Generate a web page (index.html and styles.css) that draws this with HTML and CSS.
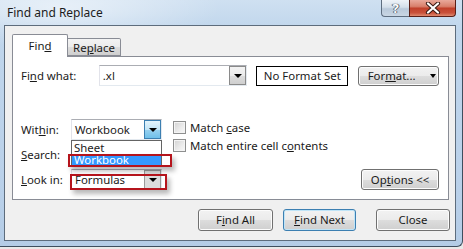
FILE: index.html
```html
<!DOCTYPE html>
<html>
<head>
<meta charset="utf-8">
<link rel="stylesheet" href="styles.css">
</head>
<body>
<div class="window">
  <div class="titlebar">
    <div class="title">Find and Replace</div>
    <div class="caption-btns">
      <div class="cap-help">?</div>
      <div class="cap-close">
        <svg width="16" height="12" viewBox="0 0 16 12">
          <path d="M3 1.5 L13 10.5 M13 1.5 L3 10.5" stroke="#3a1a14" stroke-width="4.2" stroke-linecap="round"/>
          <path d="M3 1.5 L13 10.5 M13 1.5 L3 10.5" stroke="#ffffff" stroke-width="2.2" stroke-linecap="round"/>
        </svg>
      </div>
    </div>
  </div>
  <div class="client">
    <div class="tabs">
      <div class="tab active"><span>Fin<u>d</u></span></div>
      <div class="tab"><span>Re<u>p</u>lace</span></div>
    </div>
    <div class="panel">
      <div class="row-find">
        <div class="lbl lbl-find">Fi<u>n</u>d what:</div>
        <div class="combo combo-find">
          <span class="combo-text">.xl</span>
          <span class="drop"><i class="arrow"></i></span>
        </div>
        <div class="noformat">No Format Set</div>
        <div class="btn btn-format"><span>For<u>m</u>at...</span><i class="arrow small"></i></div>
      </div>
      <div class="lower">
        <div class="opts-grid">
          <div class="lbl">Wit<u>h</u>in:</div>
          <div class="combo combo-sm combo-within">
            <span class="combo-text">Workbook</span>
            <span class="drop drop-hot"><i class="arrow"></i></span>
            <div class="droplist">
              <div class="item"><span class="item-text">Sheet</span></div>
              <div class="item sel"><span class="item-text">Workbook</span></div>
            </div>
          </div>
          <div class="lbl"><u>S</u>earch:</div>
          <div class="combo combo-sm">
            <span class="combo-text"></span>
            <span class="drop"><i class="arrow"></i></span>
          </div>
          <div class="lbl"><u>L</u>ook in:</div>
          <div class="combo combo-sm combo-look">
            <span class="combo-text">Formulas</span>
            <span class="drop drop-gray"><i class="arrow"></i></span>
          </div>
        </div>
        <div class="checks">
          <div class="check"><span class="box"></span><span>Match <u>c</u>ase</span></div>
          <div class="check"><span class="box"></span><span>Match entire cell c<u>o</u>ntents</span></div>
        </div>
        <div class="btn btn-options"><span>Op<u>t</u>ions &lt;&lt;</span></div>
      </div>
      <div class="mark mark1"></div>
      <div class="mark mark2"></div>
    </div>
    <div class="actions">
      <div class="btn btn-act btn-findall"><span>F<u>i</u>nd All</span></div>
      <div class="btn btn-act btn-findnext default"><span><u>F</u>ind Next</span></div>
      <div class="btn btn-act btn-close"><span>Close</span></div>
    </div>
  </div>
</div>
</body>
</html>
```
FILE: styles.css
```css
* { box-sizing: border-box; }
html, body { margin: 0; padding: 0; }
body {
  width: 463px;
  height: 249px;
  overflow: hidden;
  background: #e9e9e9;
  font-family: "Noto Sans", "Open Sans", sans-serif;
  font-size: 11.4px;
  color: #1a1a1a;
}
u { text-decoration: underline; text-underline-offset: 1px; }

.window {
  width: 463px;
  height: 247px;
  background:
    radial-gradient(ellipse 160px 40px at 60px 8px, rgba(255,255,255,0.55), rgba(255,255,255,0) 100%),
    linear-gradient(to bottom, #cfe0f1 0px, #c0d6ec 30px, #b9d0e9 200px, #b4cce6 247px);
  border-bottom: 1px solid #3e4e5e;
  border-right: 1px solid #3e4e5e;
  border-bottom-right-radius: 6px;
}

.titlebar {
  height: 25px;
  display: flex;
  justify-content: space-between;
  align-items: flex-start;
}
.title {
  padding-left: 7px;
  padding-top: 4px;
  line-height: 18px;
  font-size: 12px;
  color: #1c1c1c;
}
.caption-btns {
  display: flex;
  margin-right: 6px;
}
.cap-help {
  width: 28px;
  height: 17px;
  border: 1px solid #5e6e80;
  border-top: none;
  border-right: none;
  border-bottom-left-radius: 4px;
  background: linear-gradient(to bottom, #eef3f8 0%, #d4dfea 45%, #b9c9da 55%, #c9d6e4 100%);
  color: #ffffff;
  font-weight: bold;
  font-size: 13px;
  line-height: 16px;
  text-align: center;
  text-shadow: 0 0 1px #4a5766, 0 0 1px #4a5766, 1px 0 0 #6a7786, -1px 0 0 #6a7786;
}
.cap-close {
  width: 47px;
  height: 17px;
  border: 1px solid #5a1f18;
  border-top: none;
  border-bottom-right-radius: 4px;
  background: linear-gradient(to bottom, #e9a99b 0%, #d9806c 40%, #c1412b 52%, #c9503a 80%, #df8a6f 100%);
  display: flex;
  align-items: center;
  justify-content: center;
}

.client {
  margin-left: 4px;
  width: 452px;
  height: 216px;
  border: 1px solid #5d6c7c;
  background: #f0f0f0;
  padding: 8px 0 0 7px;
}

.tabs {
  display: flex;
  align-items: flex-end;
  height: 22px;
  position: relative;
  z-index: 2;
}
.tab {
  width: 53px;
  height: 18px;
  border: 1px solid #898c95;
  border-left: none;
  background: linear-gradient(to bottom, #f3f3f3 0%, #ebebeb 50%, #dddddd 51%, #cfcfcf 100%);
  text-align: center;
  line-height: 17px;
  border-top-right-radius: 2px;
}
.tab.active {
  width: 56px;
  height: 23px;
  border-left: 1px solid #898c95;
  border-bottom: none;
  background: #ffffff;
  line-height: 22px;
  margin-bottom: -1px;
  border-top-left-radius: 2px;
}

.panel {
  position: relative;
  width: 437px;
  height: 144px;
  background: #ffffff;
  border: 1px solid #898c95;
  padding: 8px 9px 0 8px;
}

.row-find {
  display: flex;
  align-items: center;
  height: 21px;
}
.lbl { line-height: 21px; white-space: nowrap; }
.lbl-find { width: 78px; }

.combo {
  position: relative;
  height: 21px;
  border: 1px solid #abadb3;
  border-left-color: #e2e3ea;
  border-right-color: #e3e9ef;
  border-bottom-color: #e3e9ef;
  background: #ffffff;
  display: flex;
  align-items: center;
  justify-content: space-between;
}
.combo-find { width: 149px; }
.combo-text { padding-left: 3px; line-height: 19px; white-space: nowrap; }
.drop {
  width: 17px;
  height: 19px;
  border: 1px solid #8a8a8a;
  background: linear-gradient(to bottom, #f3f3f3 0%, #ebebeb 50%, #dddddd 51%, #cfcfcf 100%);
  display: flex;
  align-items: center;
  justify-content: center;
}
.drop-hot {
  border-color: #3c7fb1;
  background: linear-gradient(to bottom, #e3f4fc 0%, #c4e5f6 50%, #98d1ef 51%, #6fc0ea 100%);
}
.drop-gray {
  background: #dcdcdc;
  border-color: #9a9a9a;
}
.arrow {
  display: block;
  width: 0;
  height: 0;
  border-left: 4px solid transparent;
  border-right: 4px solid transparent;
  border-top: 4px solid #000;
}
.arrow.small {
  border-left-width: 3px;
  border-right-width: 3px;
  border-top-width: 4px;
  margin-left: 14px;
}

.noformat {
  margin-left: 9px;
  width: 92px;
  height: 20px;
  border: 1.5px solid #000;
  text-align: center;
  line-height: 17px;
}

.btn {
  height: 20px;
  border: 1px solid #707070;
  border-radius: 3px;
  background: linear-gradient(to bottom, #f2f2f2 0%, #ebebeb 50%, #dddddd 51%, #cfcfcf 100%);
  box-shadow: inset 0 0 0 1px #fcfcfc;
  display: flex;
  align-items: center;
  justify-content: center;
  line-height: 18px;
  white-space: nowrap;
}
.btn-format {
  margin-left: 10px;
  width: 81px;
  padding-left: 6px;
}

.lower {
  display: flex;
  align-items: flex-start;
  margin-top: 33px;
  height: 72px;
}
.opts-grid {
  display: grid;
  grid-template-columns: 50px 91px;
  grid-auto-rows: 21px;
  row-gap: 4px;
}
.combo-sm { width: 91px; }

.droplist {
  position: absolute;
  left: -1px;
  top: 20px;
  width: 91px;
  height: 27px;
  background: #ffffff;
  border: 1px solid #646464;
  z-index: 3;
}
.droplist .item {
  height: 12.5px;
  padding-left: 2px;
  display: flex;
  align-items: center;
  overflow: hidden;
}
.droplist .item-text {
  line-height: 11px;
  font-size: 11.4px;
}
.droplist .item.sel {
  background: #3399ff;
  color: #ffffff;
}

.checks {
  margin-left: 11px;
  margin-top: -1px;
  display: flex;
  flex-direction: column;
}
.check {
  display: flex;
  align-items: center;
  height: 18px;
  white-space: nowrap;
}
.box {
  width: 13px;
  height: 13px;
  border: 1px solid #8e8f8f;
  background: linear-gradient(135deg, #d2d2d2 0%, #ececec 60%, #f9f9f9 100%);
  box-shadow: inset 0 0 0 1px #f4f4f4;
  margin-right: 4px;
}

.btn-options {
  margin-left: auto;
  align-self: flex-end;
  margin-bottom: 1px;
  width: 78px;
  height: 21px;
}

.mark {
  position: absolute;
  border: 2px solid #b5141c;
  box-shadow: 3px 4px 5px rgba(0,0,0,0.28);
  z-index: 4;
}
.mark1 { left: 55px; top: 97px; width: 104px; height: 13px; }
.mark2 { left: 57px; top: 117px; width: 97px; height: 16px; }

.actions {
  display: flex;
  margin-top: 9px;
}
.btn-act { height: 22px; }
.btn-findall { margin-left: 186px; width: 75px; }
.btn-findnext { margin-left: 10px; width: 73px; }
.btn-close { margin-left: 20px; width: 74px; }
.btn.default {
  border-color: #3c7fb1;
  box-shadow: inset 0 0 0 1px #bfe4f7;
}
```
